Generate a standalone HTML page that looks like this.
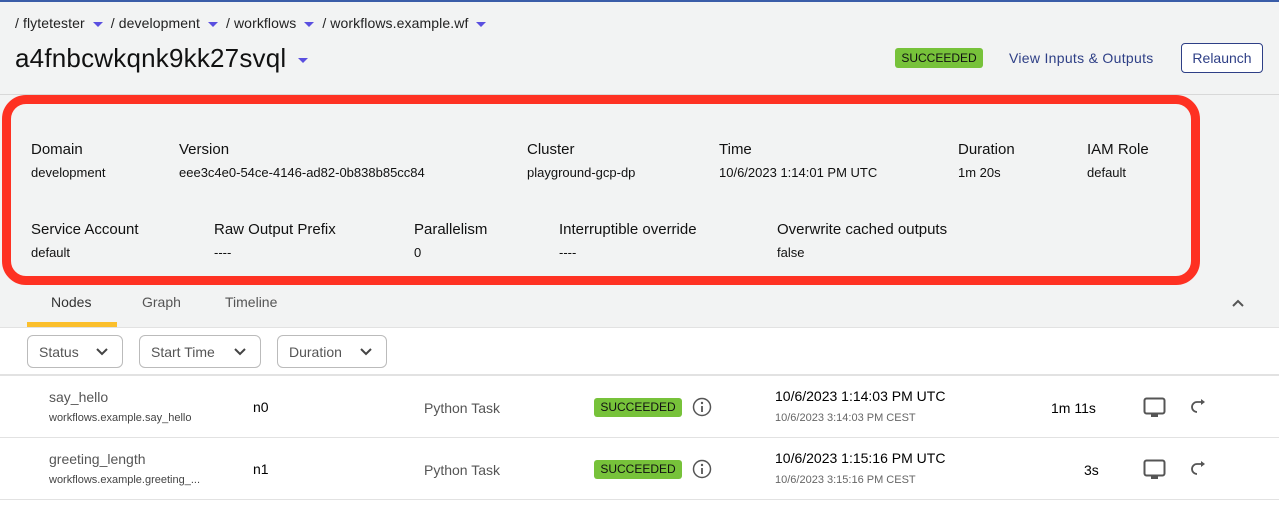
<!DOCTYPE html>
<html><head><meta charset="utf-8"><style>
*{box-sizing:border-box;margin:0;padding:0}
body{width:1279px;height:516px;overflow:hidden;background:#fff;font-family:"Liberation Sans",sans-serif;color:#000;position:relative}
.abs{position:absolute;white-space:nowrap}
.top{position:absolute;left:0;top:0;width:1279px;height:327px;background:#f2f3f3;border-top:2px solid #3a5da8}
.caret{display:inline-block;width:0;height:0;border-left:5px solid transparent;border-right:5px solid transparent;border-top:5px solid #5a4fe0;vertical-align:middle;margin:0 4px}
.badge{position:absolute;background:#77c23a;color:#111;font-size:12px;border-radius:3px;text-align:center}
.lab{font-size:15px;color:#111}
.val{font-size:13px;color:#111}
.fb{position:absolute;top:335px;height:33px;border:1px solid #bbb;border-radius:6px;background:#fff;font-size:14px;color:#555;padding:8px 0 0 11px}
.fb svg{position:absolute;right:14px;top:12px}
.line{position:absolute;left:0;width:1279px;background:#e2e2e2}
.gray{color:#555}
</style></head><body>
<div class="top"></div>
<div class="abs" style="left:15px;top:15px;font-size:14px;color:#222;letter-spacing:0.1px">/ flytetester <span class="caret"></span> / development <span class="caret"></span> / workflows <span class="caret"></span> / workflows.example.wf <span class="caret"></span></div>
<div class="abs" style="left:15px;top:43px;font-size:26px;color:#111;letter-spacing:0.2px">a4fnbcwkqnk9kk27svql <span class="caret" style="margin-left:4px"></span></div>
<div class="badge" style="left:895px;top:48px;width:88px;height:20px;line-height:20px">SUCCEEDED</div>
<div class="abs" style="left:1009px;top:50px;font-size:14px;color:#2e3f86;letter-spacing:0.3px">View Inputs &amp; Outputs</div>
<div class="abs" style="left:1181px;top:43px;width:82px;height:30px;border:1px solid #2e3f86;border-radius:4px;background:#fff;font-size:14px;color:#2e3f86;text-align:center;line-height:28px">Relaunch</div>
<div class="line" style="top:94px;height:1px;background:#d8d8d8"></div>
<div class="abs" style="left:2px;top:95px;width:1198px;height:190px;border:9px solid #fe3122;border-radius:24px;background:#f2f3f3"></div>
<div class="abs lab" style="left:31px;top:141px">Domain</div><div class="abs val" style="left:31px;top:165px">development</div>
<div class="abs lab" style="left:179px;top:141px">Version</div><div class="abs val" style="left:179px;top:165px">eee3c4e0-54ce-4146-ad82-0b838b85cc84</div>
<div class="abs lab" style="left:527px;top:141px">Cluster</div><div class="abs val" style="left:527px;top:165px">playground-gcp-dp</div>
<div class="abs lab" style="left:719px;top:141px">Time</div><div class="abs val" style="left:719px;top:165px">10/6/2023 1:14:01 PM UTC</div>
<div class="abs lab" style="left:958px;top:141px">Duration</div><div class="abs val" style="left:958px;top:165px">1m 20s</div>
<div class="abs lab" style="left:1087px;top:141px">IAM Role</div><div class="abs val" style="left:1087px;top:165px">default</div>
<div class="abs lab" style="left:31px;top:221px">Service Account</div><div class="abs val" style="left:31px;top:245px">default</div>
<div class="abs lab" style="left:214px;top:221px">Raw Output Prefix</div><div class="abs val" style="left:214px;top:245px">----</div>
<div class="abs lab" style="left:414px;top:221px">Parallelism</div><div class="abs val" style="left:414px;top:245px">0</div>
<div class="abs lab" style="left:559px;top:221px">Interruptible override</div><div class="abs val" style="left:559px;top:245px">----</div>
<div class="abs lab" style="left:777px;top:221px">Overwrite cached outputs</div><div class="abs val" style="left:777px;top:245px">false</div>
<div class="abs" style="left:51px;top:294px;font-size:14px;color:#333">Nodes</div>
<div class="abs" style="left:142px;top:294px;font-size:14px;color:#555">Graph</div>
<div class="abs" style="left:225px;top:294px;font-size:14px;color:#555">Timeline</div>
<div class="abs" style="left:27px;top:322px;width:90px;height:5px;background:#fbbf2c"></div>
<svg class="abs" style="left:1231px;top:298px" width="14" height="10"><path d="M2 8L7 3L12 8" fill="none" stroke="#555" stroke-width="2"/></svg>
<div class="line" style="top:327px;height:1px"></div>
<div class="fb" style="left:27px;width:96px">Status<svg width="12" height="8"><path d="M1 1L6 6L11 1" fill="none" stroke="#444" stroke-width="2"/></svg></div>
<div class="fb" style="left:139px;width:122px">Start Time<svg width="12" height="8"><path d="M1 1L6 6L11 1" fill="none" stroke="#444" stroke-width="2"/></svg></div>
<div class="fb" style="left:277px;width:110px">Duration<svg width="12" height="8"><path d="M1 1L6 6L11 1" fill="none" stroke="#444" stroke-width="2"/></svg></div>
<div class="line" style="top:374px;height:2px"></div>
<div class="line" style="top:437px;height:1px"></div>
<div class="line" style="top:499px;height:1px"></div>

<div class="abs gray" style="left:49px;top:389px;font-size:14px">say_hello</div>
<div class="abs gray" style="left:49px;top:412px;font-size:11px;color:#444">workflows.example.say_hello</div>
<div class="abs" style="left:253px;top:399px;font-size:14px">n0</div>
<div class="abs gray" style="left:424px;top:400px;font-size:14px">Python Task</div>
<div class="badge" style="left:594px;top:398px;width:88px;height:19px;line-height:19px">SUCCEEDED</div>
<svg class="abs" style="left:692px;top:397px" width="20" height="20"><circle cx="10" cy="10" r="8.5" fill="none" stroke="#555" stroke-width="1.5"/><circle cx="10" cy="6" r="1.2" fill="#555"/><path d="M10 9v6" stroke="#555" stroke-width="1.8"/></svg>
<div class="abs" style="left:775px;top:388px;font-size:14px">10/6/2023 1:14:03 PM UTC</div>
<div class="abs gray" style="left:775px;top:412px;font-size:11px;color:#666">10/6/2023 3:14:03 PM CEST</div>
<div class="abs" style="left:1051px;top:400px;font-size:14px">1m 11s</div>

<div class="abs gray" style="left:49px;top:451px;font-size:14px">greeting_length</div>
<div class="abs gray" style="left:49px;top:474px;font-size:11px;color:#444">workflows.example.greeting_...</div>
<div class="abs" style="left:253px;top:461px;font-size:14px">n1</div>
<div class="abs gray" style="left:424px;top:462px;font-size:14px">Python Task</div>
<div class="badge" style="left:594px;top:460px;width:88px;height:19px;line-height:19px">SUCCEEDED</div>
<svg class="abs" style="left:692px;top:459px" width="20" height="20"><circle cx="10" cy="10" r="8.5" fill="none" stroke="#555" stroke-width="1.5"/><circle cx="10" cy="6" r="1.2" fill="#555"/><path d="M10 9v6" stroke="#555" stroke-width="1.8"/></svg>
<div class="abs" style="left:775px;top:450px;font-size:14px">10/6/2023 1:15:16 PM UTC</div>
<div class="abs gray" style="left:775px;top:474px;font-size:11px;color:#666">10/6/2023 3:15:16 PM CEST</div>
<div class="abs" style="left:1084px;top:462px;font-size:14px">3s</div>

<svg class="abs" style="left:1143px;top:397px" width="24" height="22"><rect x="1.5" y="1.5" width="20" height="15" rx="2" fill="none" stroke="#555" stroke-width="2"/><rect x="8" y="17" width="7" height="3" fill="#555"/></svg>
<svg class="abs" style="left:1189px;top:397px" width="20" height="20"><path d="M14 5H8a5 5 0 0 0 0 10" fill="none" stroke="#555" stroke-width="1.8"/><path d="M12 2l4 3l-4 3z" fill="#555"/></svg>
<svg class="abs" style="left:1143px;top:459px" width="24" height="22"><rect x="1.5" y="1.5" width="20" height="15" rx="2" fill="none" stroke="#555" stroke-width="2"/><rect x="8" y="17" width="7" height="3" fill="#555"/></svg>
<svg class="abs" style="left:1189px;top:459px" width="20" height="20"><path d="M14 5H8a5 5 0 0 0 0 10" fill="none" stroke="#555" stroke-width="1.8"/><path d="M12 2l4 3l-4 3z" fill="#555"/></svg>
</body></html>
